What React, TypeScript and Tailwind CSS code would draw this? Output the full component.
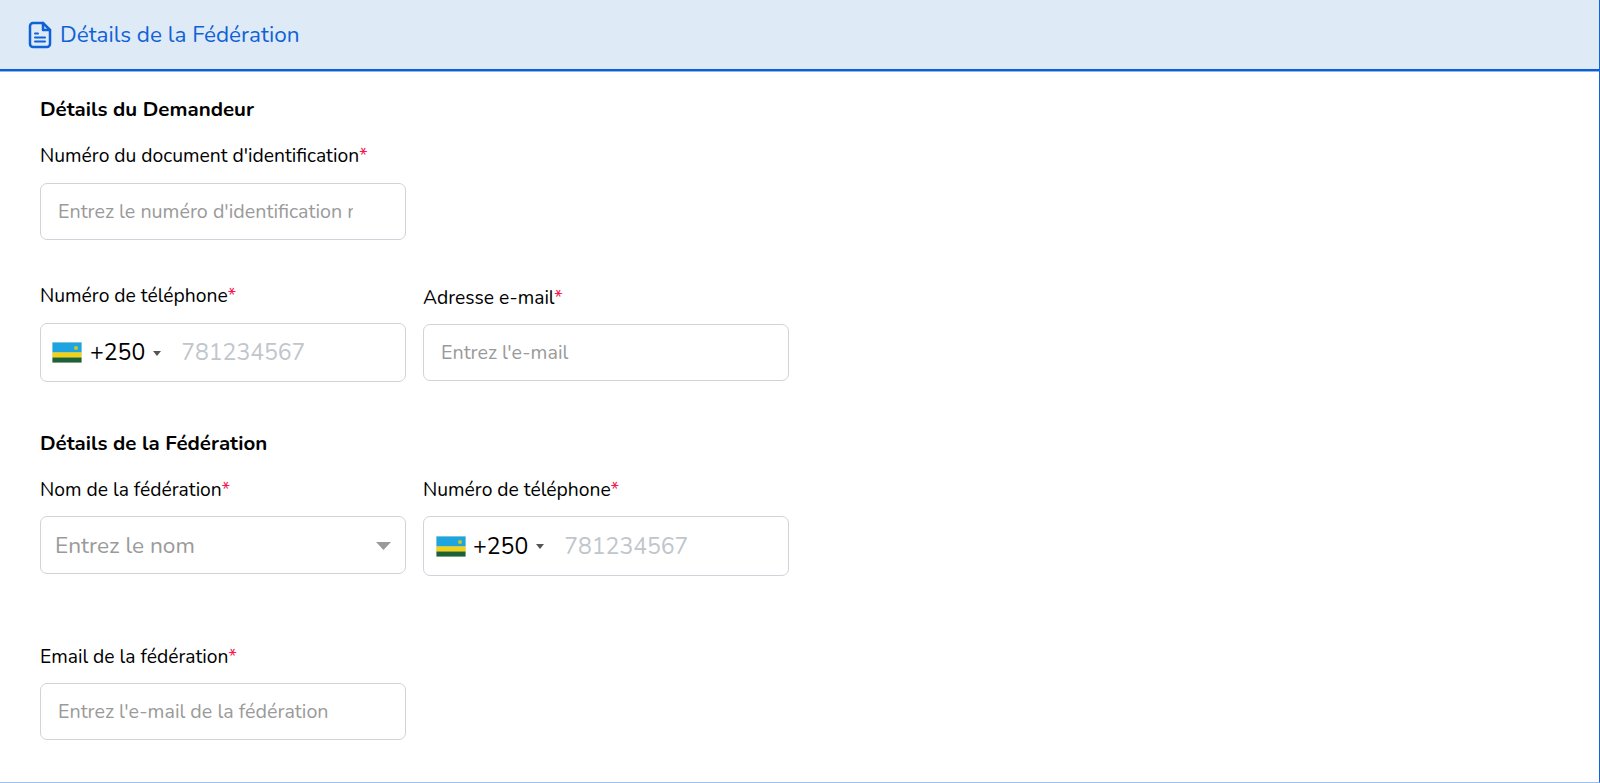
const font = "font-['Nunito','Lato','Noto_Sans',sans-serif]";

function Flag({ className = "" }: { className?: string }) {
  return (
    <svg width="30" height="21" viewBox="0 0 30 21" className={`shrink-0 ${className}`}>
      <rect width="30" height="21" fill="#dfe3e3" />
      <rect x="0.5" y="0.5" width="29" height="10" fill="#1ea5e0" />
      <rect x="0.5" y="10.500" width="29" height="5" fill="#f5d20f" />
      <rect x="0.5" y="15.500" width="29" height="5" fill="#1e6135" />
      <circle cx="24" cy="6" r="2" fill="#c9c42c" />
    </svg>
  );
}

function Label({ text, className = "" }: { text: string; className?: string }) {
  return (
    <label className={`block text-[19.3px] leading-6 text-black ${className}`}>
      {text}
      <span className="text-[#f5174f]">*</span>
    </label>
  );
}

function TextInput({ placeholder, clip = false }: { placeholder: string; clip?: boolean }) {
  return (
    <input
      readOnly
      placeholder={placeholder}
      className={`block h-[57px] w-full rounded-[7px] border border-[#ced4da] bg-white pl-[17px] text-[19.7px] outline-none placeholder:text-[#9a9a9a] ${clip ? "pr-[52px]" : "pr-[18px]"}`}
    />
  );
}

function Phone({ second = false }: { second?: boolean }) {
  return (
    <div className={`flex w-full items-center rounded-[7px] border border-[#ced4da] bg-white ${second ? "h-[60px] pl-[12px]" : "h-[59px] pl-[11px]"}`}>
      <Flag />
      <span className={`mt-[2px] text-[23px] text-black ${second ? "ml-[7px]" : "ml-[8px]"}`}>+250</span>
      <svg width="8" height="5" viewBox="0 0 8 5" className="ml-[8px] mt-[1px]">
        <path d="M0 0h8L4 5z" fill="#555" />
      </svg>
      <span className="ml-[20px] mt-[2px] text-[23px] text-[#c0c6cc]">781234567</span>
    </div>
  );
}

export default function App() {
  return (
    <div className={`flex h-[783px] w-full flex-col overflow-hidden border-r border-b border-r-[#1464d2] border-b-[#9cc0f0] bg-white ${font}`}>
      <header className="flex h-[71px] shrink-0 items-center border-b-2 border-[#0b5ed7] bg-[#dfeaf7] pl-[28px] shadow-[0_1px_0_#8fb6ec]">
        <svg width="24" height="28" viewBox="0 0 24 28" fill="none" stroke="#0f62d6" strokeLinejoin="round" strokeLinecap="round">
          <path strokeWidth="2.5" d="M15 2H5a3 3 0 0 0-3 3v18a3 3 0 0 0 3 3h14a3 3 0 0 0 3-3V9z" />
          <path strokeWidth="2.5" d="M15 2v7h7" />
          <path strokeWidth="2" d="M7 12.500h3M7 16.500h10M7 20.500h10" />
        </svg>
        <h1 className="ml-[8px] text-[22.500px] font-normal text-[#0f62d6]">Détails de la Fédération</h1>
      </header>

      <main className="flex w-[749px] flex-col pl-[40px]">
        <h2 className="mt-[26px] text-[20.500px] font-bold leading-6 text-black">Détails du Demandeur</h2>
        <Label text="Numéro du document d'identification" className="mt-[23px]" />
        <div className="mt-[15px] w-[366px]">
          <TextInput clip placeholder="Entrez le numéro d'identification national" />
        </div>

        <div className="mt-[44px] grid grid-cols-[366px_366px] gap-x-[17px]">
          <div>
            <Label text="Numéro de téléphone" />
            <div className="mt-[15px]"><Phone /></div>
          </div>
          <div className="pt-[2px]">
            <Label text="Adresse e-mail" />
            <div className="mt-[14px]"><TextInput placeholder="Entrez l'e-mail" /></div>
          </div>
        </div>

        <h2 className="mt-[49px] text-[20.500px] font-bold leading-6 text-black">Détails de la Fédération</h2>
        <div className="mt-[23px] grid grid-cols-[366px_366px] gap-x-[17px]">
          <div>
            <Label text="Nom de la fédération" />
            <div className="mt-[14px] flex h-[58px] items-center justify-between rounded-[7px] border border-[#ced4da] bg-white pl-[14px] pr-[14px]">
              <span className="mt-[2px] text-[22.700px] text-[#9a9a9a]">Entrez le nom</span>
              <svg width="15" height="8" viewBox="0 0 15 8" className="mt-[1px]"><path d="M0 0h15L7.500 8z" fill="#9a9a9a" /></svg>
            </div>
          </div>
          <div>
            <Label text="Numéro de téléphone" />
            <div className="mt-[14px]"><Phone second /></div>
          </div>
        </div>

        <Label text="Email de la fédération" className="mt-[69px]" />
        <div className="mt-[14px] w-[366px]">
          <TextInput placeholder="Entrez l'e-mail de la fédération" />
        </div>
      </main>
    </div>
  );
}
